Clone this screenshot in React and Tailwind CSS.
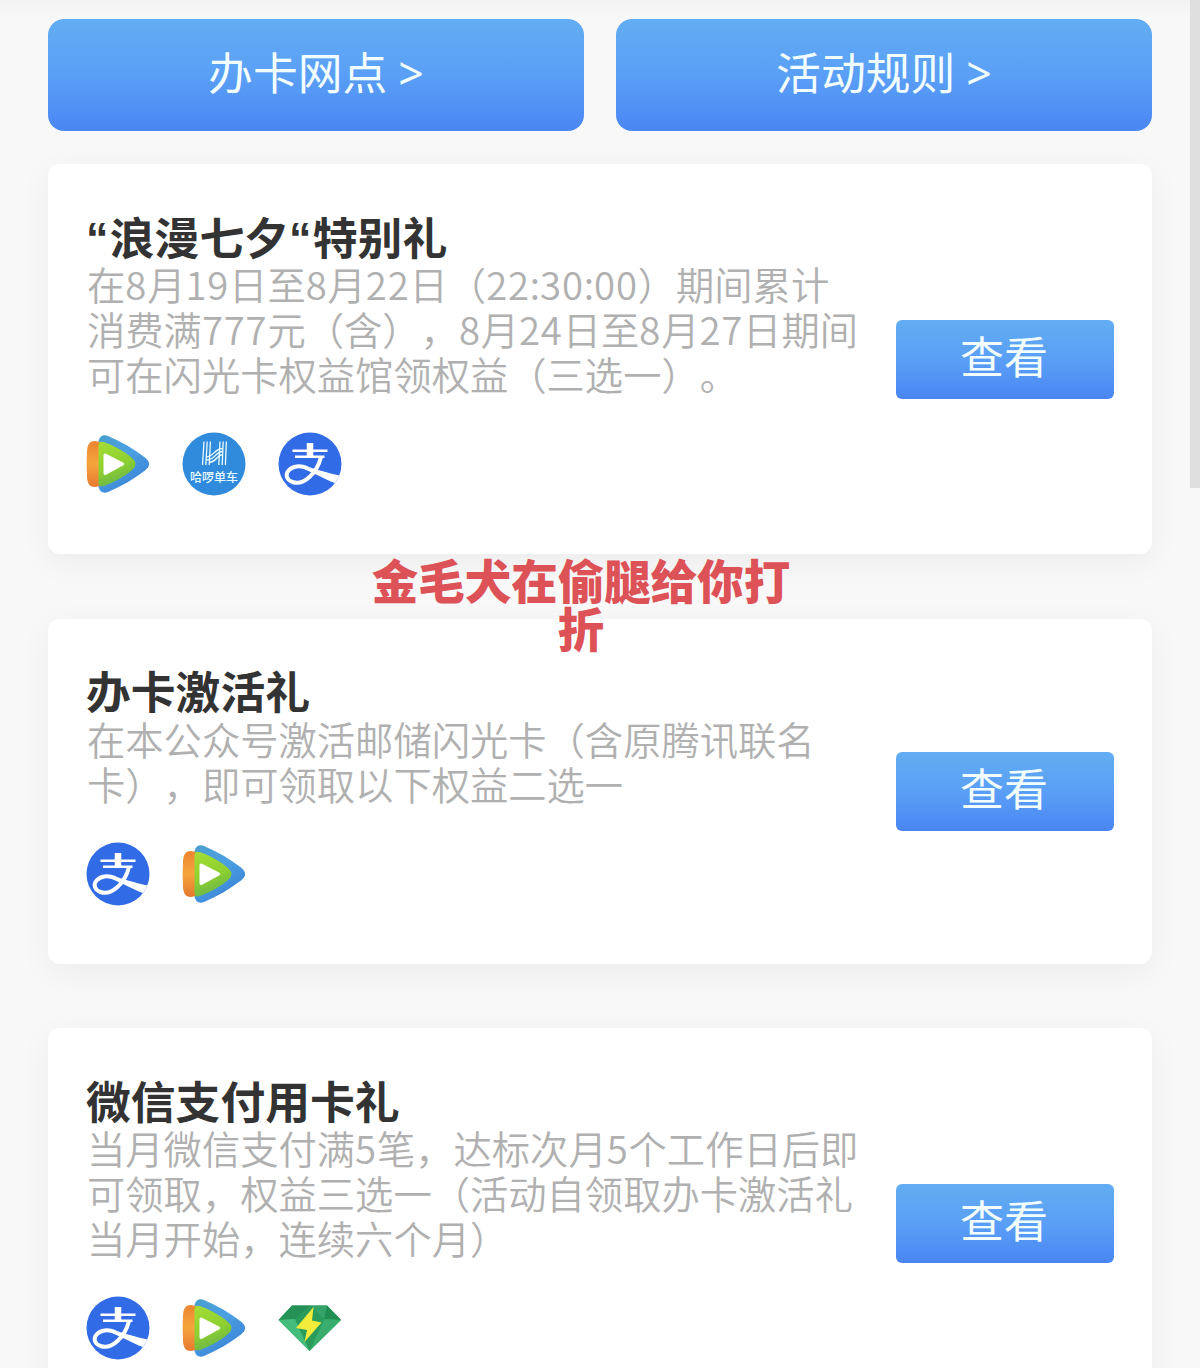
import React from "react";

const gifts = [
  {
    id: 1,
    title: "浪漫七夕",
    suffix: "特别礼",
    quoted: true,
    lines: [
      "在8月19日至8月22日（22:30:00）期间累计",
      "消费满777元（含），8月24日至8月27日期间",
      "可在闪光卡权益馆领权益（三选一）。",
    ],
    icons: ["video", "bike", "pay"],
  },
  {
    id: 2,
    title: "办卡激活礼",
    lines: [
      "在本公众号激活邮储闪光卡（含原腾讯联名",
      "卡），即可领取以下权益二选一",
    ],
    icons: ["pay", "video"],
  },
  {
    id: 3,
    title: "微信支付用卡礼",
    lines: [
      "当月微信支付满5笔，达标次月5个工作日后即",
      "可领取，权益三选一（活动自领取办卡激活礼",
      "当月开始，连续六个月）",
    ],
    icons: ["pay", "video", "gem"],
  },
];

function VideoIcon() {
  return (
    <svg viewBox="0 0 64 64" className="h-16 w-16">
      <defs>
        <linearGradient id="vBlue" x1="0" y1="0" x2="0.6" y2="1">
          <stop offset="0" stopColor="#4a9fd0" />
          <stop offset="0.5" stopColor="#4c9fe2" />
          <stop offset="1" stopColor="#3a83d6" />
        </linearGradient>
        <linearGradient id="vOrange" x1="0" y1="0" x2="0" y2="1">
          <stop offset="0" stopColor="#ec8530" />
          <stop offset="0.5" stopColor="#f5a53c" />
          <stop offset="1" stopColor="#e5782f" />
        </linearGradient>
        <linearGradient id="vGreen" x1="0.2" y1="0" x2="0.5" y2="1">
          <stop offset="0" stopColor="#a3dc35" />
          <stop offset="0.55" stopColor="#8ed02f" />
          <stop offset="1" stopColor="#68b54a" />
        </linearGradient>
      </defs>
      <path
        d="M12.500 10C13 4.500 17 2 22 4C36 10 48 17 59 25.500C64.500 30 64.500 34 59 38.500C48 47 36 54 22 60C17 62 13 59.500 12.500 54Z"
        fill="url(#vBlue)"
      />
      <path
        d="M1 19C1.500 12 4 9 9 9L16 10.500V53.500L9 55C4 55 1.500 52 1 45Q0.200 32 1 19Z"
        fill="url(#vOrange)"
      />
      <path
        d="M12.500 13Q12.500 8.500 17.500 10C29 14 39 19.500 47 27Q52 32 47 37C39 44.500 29 50 17.500 54Q12.500 55.500 12.500 51Z"
        fill="url(#vGreen)"
      />
      <path
        d="M17.500 23.500Q17.500 20.500 20.500 22L37 30.500Q39.500 32 37 33.500L20.500 42.500Q17.500 44 17.500 41Z"
        fill="#fff"
      />
    </svg>
  );
}

function PayIcon() {
  return (
    <svg viewBox="0 0 64 64" className="h-16 w-16">
      <defs>
        <clipPath id="payClip">
          <circle cx="32" cy="32" r="31.500" />
        </clipPath>
      </defs>
      <circle cx="32" cy="32" r="31.500" fill="#326be6" />
      <g clipPath="url(#payClip)" fill="none" stroke="#fff">
        <path d="M32 11V25" strokeWidth="6.500" />
        <path d="M14.500 18.700H49.500M17 24.800H46.500" strokeWidth="2.600" />
        <path
          d="M43 25C41 33 37 40 31.500 45C26.500 49.500 20 52 14.500 50C8.500 48 7 42.500 10.500 38.500C14.500 34 22 33 29 36"
          strokeWidth="4"
        />
        <path
          d="M27 33.500C36 37 48 40.500 64 44L61 52.500C50 49 39 42.500 27 37.500Z"
          stroke="none"
          fill="#fff"
        />
      </g>
    </svg>
  );
}

function BikeIcon() {
  return (
    <svg viewBox="0 0 64 64" className="h-16 w-16">
      <circle cx="32" cy="32" r="31.500" fill="#318bdc" />
      <g fill="none" stroke="#e8fbff" strokeWidth="1.300">
        <path d="M22 9.500L20.500 33M25.200 9.500L23.800 33M28.400 9.500L27.200 33" />
        <path d="M38 9.500L36.800 33M41.200 9.500L40.200 33M44.400 9.500L43.400 33" />
        <path d="M24 25C33 24.500 31 17 41 16.500M24 28C35 27.500 32 20 41 19.500M27.500 30.500C36 29 34 23 41 22.500" />
      </g>
      <text
        x="32"
        y="49.500"
        textAnchor="middle"
        fontSize="12"
        fontWeight="500"
        fill="#e8fbff"
        fontFamily="'Noto Sans CJK SC', sans-serif"
      >
        哈啰单车
      </text>
    </svg>
  );
}

function GemIcon() {
  return (
    <svg viewBox="0 0 64 64" className="h-16 w-16">
      <path d="M14 9.500H49L63 24L31.500 55L0.500 24Z" fill="#2fa866" />
      <path d="M14 9.500L0.500 24L17 23Z" fill="#239153" />
      <path d="M49 9.500L63 24L46 23Z" fill="#1f8e50" />
      <path d="M14 9.500H32L17 23Z" fill="#258f55" />
      <path d="M32 9.500H49L46 23Z" fill="#35a269" />
      <path d="M0.500 24L17 23L31.500 55Z" fill="#43bd79" />
      <path d="M63 24L46 23L31.500 55Z" fill="#38ad6d" />
      <path d="M17 23L32 9.500L46 23L31.500 55Z" fill="#299b5b" />
      <path d="M35.500 11L18 32L29 34L26.500 46L43.500 26.500L34 24.500Z" fill="#f3ec3b" />
    </svg>
  );
}

const icons = {
  video: VideoIcon,
  pay: PayIcon,
  bike: BikeIcon,
  gem: GemIcon,
};

function TopButton({ label }) {
  return (
    <button className="flex h-28 flex-1 items-center justify-center rounded-2xl bg-linear-to-b from-[#62adf2] via-[#5a9ff6] to-[#4a86f3] pb-[7px] text-[44.8px] leading-none text-[#f2fdff]">
      <span>{label}</span>
      <span className="mt-[3px] ml-[11px] font-['Noto_Sans']">&gt;</span>
    </button>
  );
}

function Quote() {
  return (
    <span className="inline-block w-[23.8px] pt-1 font-['Liberation_Sans']">
      “
    </span>
  );
}

// digits run a little wider than the surrounding text
function Line({ text }) {
  return (
    <p>
      {text.split(/(\d+)/).map((part, index) =>
        /\d/.test(part) ? (
          <span key={index} className="tracking-[0.8px]">
            {part}
          </span>
        ) : (
          part
        )
      )}
    </p>
  );
}

function GiftCard({ gift }) {
  return (
    <div className="flex items-center justify-between rounded-xl bg-white pr-[38px] pl-[39px] shadow-[0_8px_32px_rgba(0,0,0,0.05)]">
      <div className="pt-[47px] pb-[58px]">
        <h2 className="-ml-px flex h-[50px] items-center text-[44.8px] leading-none font-bold text-[#333]">
          {gift.quoted && <Quote />}
          {gift.title}
          {gift.quoted && <Quote />}
          {gift.suffix}
        </h2>
        <div className="text-[38.3px] leading-[45px] font-[350] whitespace-nowrap text-[#b0b0b0]">
          {gift.lines.map((line) => (
            <Line key={line} text={line} />
          ))}
        </div>
        <div className="mt-[36px] -ml-px flex gap-8">
          {gift.icons.map((name) => {
            const Icon = icons[name];
            return <Icon key={name} />;
          })}
        </div>
      </div>
      <button className="h-[79px] w-[218px] shrink-0 rounded-md bg-linear-to-b from-[#62adf2] via-[#5a9ff6] to-[#4a86f3] pr-0.5 pb-2 text-[44px] leading-none text-[#f2fdff]">
        查看
      </button>
    </div>
  );
}

function App() {
  return (
    <div className="relative h-[1368px] w-[1200px] overflow-hidden bg-[#f8f8f8] font-['Noto_Sans_CJK_SC',sans-serif] [text-spacing-trim:space-all]">
      <div className="h-[19px] bg-linear-to-b from-[#f2f2f2] to-[#f8f8f8]" />
      <div className="flex gap-8 px-12">
        <TopButton label="办卡网点" />
        <TopButton label="活动规则" />
      </div>
      <div className="mt-[33px] flex flex-col gap-[64.5px] px-12">
        {gifts.map((gift) => (
          <GiftCard key={gift.id} gift={gift} />
        ))}
      </div>
      <div className="absolute top-[555px] left-[361px] w-[440px] text-center text-[46.5px] leading-[48px] font-black text-[#dc5257]">
        金毛犬在偷腿给你打折
      </div>
      <div className="absolute top-0 right-0 h-[488px] w-[10px] bg-[#dedede]" />
    </div>
  );
}

export default App;
